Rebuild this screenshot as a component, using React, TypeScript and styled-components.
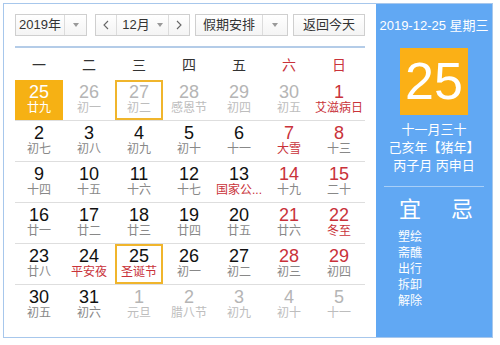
import React from 'react';
import styled, { createGlobalStyle, css } from 'styled-components';

const GlobalStyle = createGlobalStyle`
  html, body { margin: 0; padding: 0; background: #fff; }
  body {
    font-family: "Liberation Sans", "Noto Sans CJK SC", sans-serif;
    color: #333;
  }
  * { box-sizing: border-box; }
`;

const RED = '#c9323a';

const Frame = styled.div`
  margin: 3px 0 0 3px;
  width: 490px;
  height: 335px;
  border: 1px solid #a7c7ec;
  display: flex;
`;

const LeftPane = styled.div`
  width: 372px;
  padding: 10px 0 0 11px;
`;

const Toolbar = styled.div`
  display: flex;
  height: 22px;
  font-size: 13px;
  color: #333;
`;

const Box = styled.div<{ $w: number; $ml?: number }>`
  width: ${(p) => p.$w}px;
  margin-left: ${(p) => p.$ml ?? 0}px;
  height: 22px;
  border: 1px solid #cfcfcf;
  background: linear-gradient(#ffffff, #f4f4f4);
  display: flex;
  align-items: stretch;
`;

const Part = styled.div<{ $w?: number; $divider?: boolean }>`
  ${(p) => (p.$w ? css`width: ${p.$w}px; flex: none;` : css`flex: 1;`)}
  ${(p) => p.$divider && css`border-left: 1px solid #dcdcdc;`}
  display: flex;
  align-items: center;
  justify-content: center;
  gap: 7px;
  line-height: 20px;
  white-space: nowrap;
`;

const Caret = styled.span`
  width: 0;
  height: 0;
  border-left: 3.5px solid transparent;
  border-right: 3.5px solid transparent;
  border-top: 4px solid #999;
`;

const Chevron = ({ dir }: { dir: 'l' | 'r' }) => (
  <svg width="6" height="10" viewBox="0 0 6 10">
    <polyline
      points={dir === 'l' ? '5,1 1,5 5,9' : '1,1 5,5 1,9'}
      fill="none"
      stroke="#666"
      strokeWidth="1.1"
    />
  </svg>
);

const Rule = styled.div`
  margin-top: 10px;
  width: 350px;
  height: 2px;
  background: #b4cce8;
`;

const WeekRow = styled.div`
  display: grid;
  grid-template-columns: repeat(7, 50px);
  height: 32px;
  align-items: center;
  font-size: 14px;
`;

const WeekDay = styled.div<{ $red?: boolean }>`
  width: 48px;
  text-align: center;
  color: ${(p) => (p.$red ? RED : '#333')};
`;

const DayRow = styled.div<{ $last?: boolean }>`
  display: grid;
  grid-template-columns: repeat(7, 50px);
  width: 350px;
  height: 41px;
  border-bottom: ${(p) => (p.$last ? 'none' : '1px solid #dedede')};
`;

const Cell = styled.div<{ $today?: boolean; $outlined?: boolean }>`
  width: 48px;
  height: 40px;
  display: flex;
  flex-direction: column;
  align-items: center;
  padding-top: 2px;
  ${(p) => p.$today && css`background: #f6b114;`}
  ${(p) => p.$outlined && css`border: 2px solid #f0b52c; padding-top: 0;`}
`;

const Num = styled.div<{ $tone: string }>`
  font-size: 18px;
  line-height: 20px;
  color: ${(p) => p.$tone};
`;

const Lunar = styled.div<{ $tone: string }>`
  font-size: 12px;
  line-height: 14px;
  margin-top: -1px;
  color: ${(p) => p.$tone};
  white-space: nowrap;
`;

const RightPane = styled.div`
  width: 116px;
  background: #61a8f3;
  color: #fff;
  display: flex;
  flex-direction: column;
  align-items: center;
`;

const DateLine = styled.div`
  margin-top: 14px;
  font-size: 13px;
  line-height: 16px;
  white-space: nowrap;
`;

const BigDay = styled.div`
  margin-top: 14px;
  width: 68px;
  height: 67px;
  background: #fbb016;
  font-size: 52px;
  line-height: 67px;
  text-align: center;
  color: #fff;
`;

const LunarBlock = styled.div`
  margin-top: 6px;
  font-size: 13px;
  line-height: 18px;
  text-align: center;
  white-space: nowrap;
`;

const Sep = styled.div`
  margin-top: 11px;
  width: 100px;
  height: 1px;
  background: rgba(255, 255, 255, 0.45);
`;

const YiJi = styled.div`
  margin-top: 10px;
  align-self: stretch;
  padding-left: 8px;
  display: flex;
`;

const YiCol = styled.div`
  width: 52px;
  display: flex;
  flex-direction: column;
  align-items: center;
`;

const YiHead = styled.div`
  font-size: 22px;
  line-height: 26px;
  margin-bottom: 6px;
`;

const YiItem = styled.div`
  font-size: 12px;
  line-height: 16px;
`;

type Day = {
  d: number;
  l: string;
  muted?: boolean;
  red?: boolean;
  fest?: boolean;
  today?: boolean;
  outlined?: boolean;
};

const rows: Day[][] = [
  [
    { d: 25, l: '廿九', muted: true, today: true },
    { d: 26, l: '初一', muted: true },
    { d: 27, l: '初二', muted: true, outlined: true },
    { d: 28, l: '感恩节', muted: true },
    { d: 29, l: '初四', muted: true },
    { d: 30, l: '初五', muted: true },
    { d: 1, l: '艾滋病日', red: true, fest: true },
  ],
  [
    { d: 2, l: '初七' },
    { d: 3, l: '初八' },
    { d: 4, l: '初九' },
    { d: 5, l: '初十' },
    { d: 6, l: '十一' },
    { d: 7, l: '大雪', red: true, fest: true },
    { d: 8, l: '十三', red: true },
  ],
  [
    { d: 9, l: '十四' },
    { d: 10, l: '十五' },
    { d: 11, l: '十六' },
    { d: 12, l: '十七' },
    { d: 13, l: '国家公...', fest: true },
    { d: 14, l: '十九', red: true },
    { d: 15, l: '二十', red: true },
  ],
  [
    { d: 16, l: '廿一' },
    { d: 17, l: '廿二' },
    { d: 18, l: '廿三' },
    { d: 19, l: '廿四' },
    { d: 20, l: '廿五' },
    { d: 21, l: '廿六', red: true },
    { d: 22, l: '冬至', red: true, fest: true },
  ],
  [
    { d: 23, l: '廿八' },
    { d: 24, l: '平安夜', fest: true },
    { d: 25, l: '圣诞节', fest: true, outlined: true },
    { d: 26, l: '初一' },
    { d: 27, l: '初二' },
    { d: 28, l: '初三', red: true },
    { d: 29, l: '初四', red: true },
  ],
  [
    { d: 30, l: '初五' },
    { d: 31, l: '初六' },
    { d: 1, l: '元旦', muted: true },
    { d: 2, l: '腊八节', muted: true },
    { d: 3, l: '初九', muted: true },
    { d: 4, l: '初十', muted: true },
    { d: 5, l: '十一', muted: true },
  ],
];

const weekdays = ['一', '二', '三', '四', '五', '六', '日'];
const yi = ['塑绘', '斋醮', '出行', '拆卸', '解除'];

function numTone(x: Day) {
  if (x.today) return '#fff';
  if (x.muted) return '#b5b5b5';
  if (x.red) return RED;
  return '#111';
}

function lunarTone(x: Day) {
  if (x.today) return '#fff';
  if (x.muted) return '#bdbdbd';
  if (x.fest) return RED;
  return '#888';
}

export default function App() {
  return (
    <>
      <GlobalStyle />
      <Frame>
        <LeftPane>
          <Toolbar>
            <Box $w={72}>
              <Part>2019年</Part>
              <Part $w={22} $divider>
                <Caret />
              </Part>
            </Box>
            <Box $w={95} $ml={8}>
              <Part $w={20}>
                <Chevron dir="l" />
              </Part>
              <Part $divider>
                12月
                <Caret />
              </Part>
              <Part $w={21} $divider>
                <Chevron dir="r" />
              </Part>
            </Box>
            <Box $w={93} $ml={5}>
              <Part>假期安排</Part>
              <Part $w={25} $divider>
                <Caret />
              </Part>
            </Box>
            <Box $w={72} $ml={5}>
              <Part>返回今天</Part>
            </Box>
          </Toolbar>
          <Rule />
          <WeekRow>
            {weekdays.map((w, i) => (
              <WeekDay key={w} $red={i >= 5}>
                {w}
              </WeekDay>
            ))}
          </WeekRow>
          {rows.map((r, ri) => (
            <DayRow key={ri} $last={ri === rows.length - 1}>
              {r.map((x, ci) => (
                <Cell key={ci} $today={x.today} $outlined={x.outlined}>
                  <Num $tone={numTone(x)}>{x.d}</Num>
                  <Lunar $tone={lunarTone(x)}>{x.l}</Lunar>
                </Cell>
              ))}
            </DayRow>
          ))}
        </LeftPane>
        <RightPane>
          <DateLine>2019-12-25 星期三</DateLine>
          <BigDay>25</BigDay>
          <LunarBlock>
            十一月三十
            <br />
            己亥年【猪年】
            <br />
            丙子月 丙申日
          </LunarBlock>
          <Sep />
          <YiJi>
            <YiCol>
              <YiHead>宜</YiHead>
              {yi.map((t) => (
                <YiItem key={t}>{t}</YiItem>
              ))}
            </YiCol>
            <YiCol>
              <YiHead>忌</YiHead>
            </YiCol>
          </YiJi>
        </RightPane>
      </Frame>
    </>
  );
}
